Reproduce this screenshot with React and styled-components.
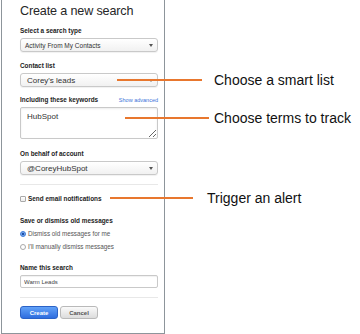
import React from 'react'
import styled, { createGlobalStyle } from 'styled-components'

const Global = createGlobalStyle`
  body {
    margin: 0;
    background: #fff;
    font-family: "Liberation Sans", Arial, sans-serif;
  }
`

const callouts = [
  { text: 'Choose a smart list', top: 80, left: 117, line: 85, gap: 12 },
  { text: 'Choose terms to track', top: 118, left: 125, line: 84, gap: 5 },
  { text: 'Trigger an alert', top: 198, left: 110, line: 83, gap: 14 }
]

const App = () => {
  return (
    <Page>
      <Global />
      <Panel>
        <Title>Create a new search</Title>

        <Label $mt={8}>Select a search type</Label>
        <Select $mt={3} $size={6.5} $pad={4}>
          <span>Activity From My Contacts</span>
          <Arrow />
        </Select>

        <Label $mt={10}>Contact list</Label>
        <Select $mt={3} $size={8} $pad={6}>
          <span>Corey's leads</span>
          <Arrow />
        </Select>

        <LabelRow $mt={9}>
          <Label>Including these keywords</Label>
          <Link>Show advanced</Link>
        </LabelRow>
        <Keywords $mt={3} defaultValue="HubSpot" />

        <Label $mt={11}>On behalf of account</Label>
        <Select $mt={3} $size={8} $pad={6}>
          <span>@CoreyHubSpot</span>
          <Arrow />
        </Select>

        <Divider $mt={9} />

        <OptionRow $mt={10}>
          <Check />
          <Label>Send email notifications</Label>
        </OptionRow>

        <Label $mt={14}>Save or dismiss old messages</Label>
        <OptionRow $mt={5}>
          <Radio $checked />
          <OptionText>Dismiss old messages for me</OptionText>
        </OptionRow>
        <OptionRow $mt={5}>
          <Radio />
          <OptionText>I'll manually dismiss messages</OptionText>
        </OptionRow>

        <Label $mt={13}>Name this search</Label>
        <NameInput $mt={3} defaultValue="Warm Leads" />

        <Divider $mt={9} />

        <Buttons>
          <Button $primary>Create</Button>
          <Button>Cancel</Button>
        </Buttons>
      </Panel>

      {/* orange annotation arrows drawn over the form */}
      {callouts.map((c) => (
        <Callout key={c.text} $top={c.top} $left={c.left} $gap={c.gap}>
          <Line $width={c.line} />
          <CalloutText>{c.text}</CalloutText>
        </Callout>
      ))}
    </Page>
  )
}

export default App

/** STYLES */
const Page = styled.div`
  position: relative;
  width: 360px;
  height: 334px;
  overflow: hidden;
`

const Panel = styled.div`
  box-sizing: border-box;
  margin-left: 1px;
  width: 164px;
  height: 334px;
  border: 1px solid #8d959b;
  border-top: none;
  padding: 3px 6px 13px 18px;
  display: flex;
  flex-direction: column;
`

const Title = styled.h1`
  margin: 0;
  font-size: 12.6px;
  line-height: 16px;
  font-weight: normal;
  letter-spacing: -0.15px;
  color: #262626;
`

const Label = styled.div`
  margin-top: ${({ $mt }) => $mt || 0}px;
  font-size: 6.4px;
  line-height: 8px;
  font-weight: bold;
  color: #222;
  white-space: nowrap;
`

const LabelRow = styled.div`
  margin-top: ${({ $mt }) => $mt}px;
  display: flex;
  justify-content: space-between;
  align-items: center;
`

const Link = styled.span`
  font-size: 5.5px;
  line-height: 8px;
  color: #3b73d9;
`

const Select = styled.div`
  margin-top: ${({ $mt }) => $mt}px;
  box-sizing: border-box;
  height: 14px;
  display: flex;
  align-items: center;
  justify-content: space-between;
  padding: 0 4px 0 ${({ $pad }) => $pad}px;
  border: 1px solid #c9c9c9;
  border-radius: 3px;
  background: linear-gradient(#ffffff, #f1f1f1);
  box-shadow: 0 1px 1px rgba(0, 0, 0, 0.06);
  font-size: ${({ $size }) => $size}px;
  color: #333;
  white-space: nowrap;
`

const Arrow = styled.span`
  width: 0;
  height: 0;
  border-left: 2.5px solid transparent;
  border-right: 2.5px solid transparent;
  border-top: 3px solid #555;
`

const Keywords = styled.textarea`
  margin: ${({ $mt }) => $mt}px 0 0;
  box-sizing: border-box;
  height: 32px;
  width: 100%;
  padding: 4px 6px;
  border: 1px solid #c9c9c9;
  border-radius: 2px;
  box-shadow: inset 0 1px 2px rgba(0, 0, 0, 0.08);
  font-family: "Liberation Sans", Arial, sans-serif;
  font-size: 8px;
  line-height: 10px;
  color: #333;
  outline: none;
`

const Divider = styled.div`
  margin-top: ${({ $mt }) => $mt}px;
  height: 1px;
  background: #e8e8e8;
`

const OptionRow = styled.div`
  margin-top: ${({ $mt }) => $mt}px;
  height: 8px;
  display: flex;
  align-items: center;
  gap: 2px;
`

const Check = styled.span`
  box-sizing: border-box;
  width: 6px;
  height: 6px;
  border: 1px solid #a9a9a9;
  border-radius: 1px;
  background: linear-gradient(#fff, #ececec);
`

const Radio = styled.span`
  box-sizing: border-box;
  width: 6px;
  height: 6px;
  border-radius: 50%;
  border: 1px solid ${({ $checked }) => ($checked ? '#3a78d8' : '#a9a9a9')};
  background: ${({ $checked }) =>
    $checked ? 'radial-gradient(circle, #1d4fa8 0 1.4px, #7fb0f0 1.6px)' : '#fff'};
`

const OptionText = styled.span`
  font-size: 6.3px;
  line-height: 8px;
  color: #555;
  white-space: nowrap;
`

const NameInput = styled.input`
  margin: ${({ $mt }) => $mt}px 0 0;
  box-sizing: border-box;
  width: 100%;
  height: 13px;
  padding: 0 3px;
  border: 1px solid #c9c9c9;
  border-radius: 2px;
  box-shadow: inset 0 1px 1px rgba(0, 0, 0, 0.06);
  font-family: "Liberation Sans", Arial, sans-serif;
  font-size: 6px;
  color: #444;
  outline: none;
`

const Buttons = styled.div`
  margin-top: 8px;
  display: flex;
  gap: 2px;
`

const Button = styled.div`
  box-sizing: border-box;
  width: 38px;
  height: 13px;
  display: flex;
  align-items: center;
  justify-content: center;
  border-radius: 3px;
  font-size: 6px;
  font-weight: bold;
  border: 1px solid ${({ $primary }) => ($primary ? '#2b62c6' : '#b9b9b9')};
  background: ${({ $primary }) =>
    $primary ? 'linear-gradient(#62a2f8, #2e6ddf)' : 'linear-gradient(#fafafa, #dcdcdc)'};
  color: ${({ $primary }) => ($primary ? '#fff' : '#555')};
`

const Callout = styled.div`
  position: absolute;
  top: ${({ $top }) => $top - 8}px;
  left: ${({ $left }) => $left}px;
  height: 16px;
  display: flex;
  align-items: center;
  gap: ${({ $gap }) => $gap}px;
`

const Line = styled.span`
  width: ${({ $width }) => $width}px;
  height: 2px;
  background: #e8772e;
`

const CalloutText = styled.span`
  font-size: 14px;
  line-height: 16px;
  color: #111;
  white-space: nowrap;
`
